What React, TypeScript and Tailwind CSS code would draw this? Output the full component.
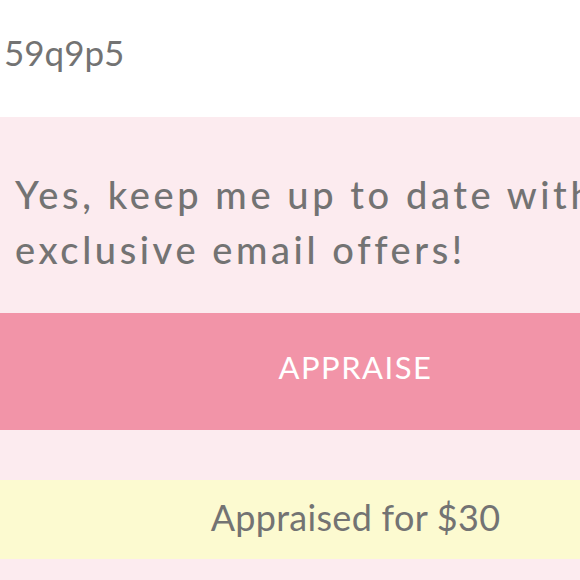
export default function App() {
  const font = { fontFamily: "Lato, 'Noto Sans', sans-serif" };
  return (
    <div className="w-[711px] bg-[#fcebef] text-[#737373] min-h-[580px]" style={font}>
      <div className="h-[117px] bg-white pl-[4px] pt-[32px]">
        <div className="text-[35px] leading-[41px]">59q9p5</div>
      </div>
      <div className="pt-[50px] px-[15px]">
        <p className="text-[38px] leading-[55px] tracking-[3.6px] font-medium">
          Yes, keep me up to date with exclusive email offers!
        </p>
      </div>
      <button className="mt-[36px] w-full h-[117px] pb-[8px] bg-[#f294a8] text-white text-[31px] tracking-[1.5px] flex items-center justify-center">
        APPRAISE
      </button>
      <div className="mt-[50px] h-[79px] pb-[5px] bg-[#fcfad0] flex items-center justify-center text-[36px] tracking-[0.3px]">
        Appraised for $30
      </div>
      <div className="h-[40px]" />
    </div>
  );
}
